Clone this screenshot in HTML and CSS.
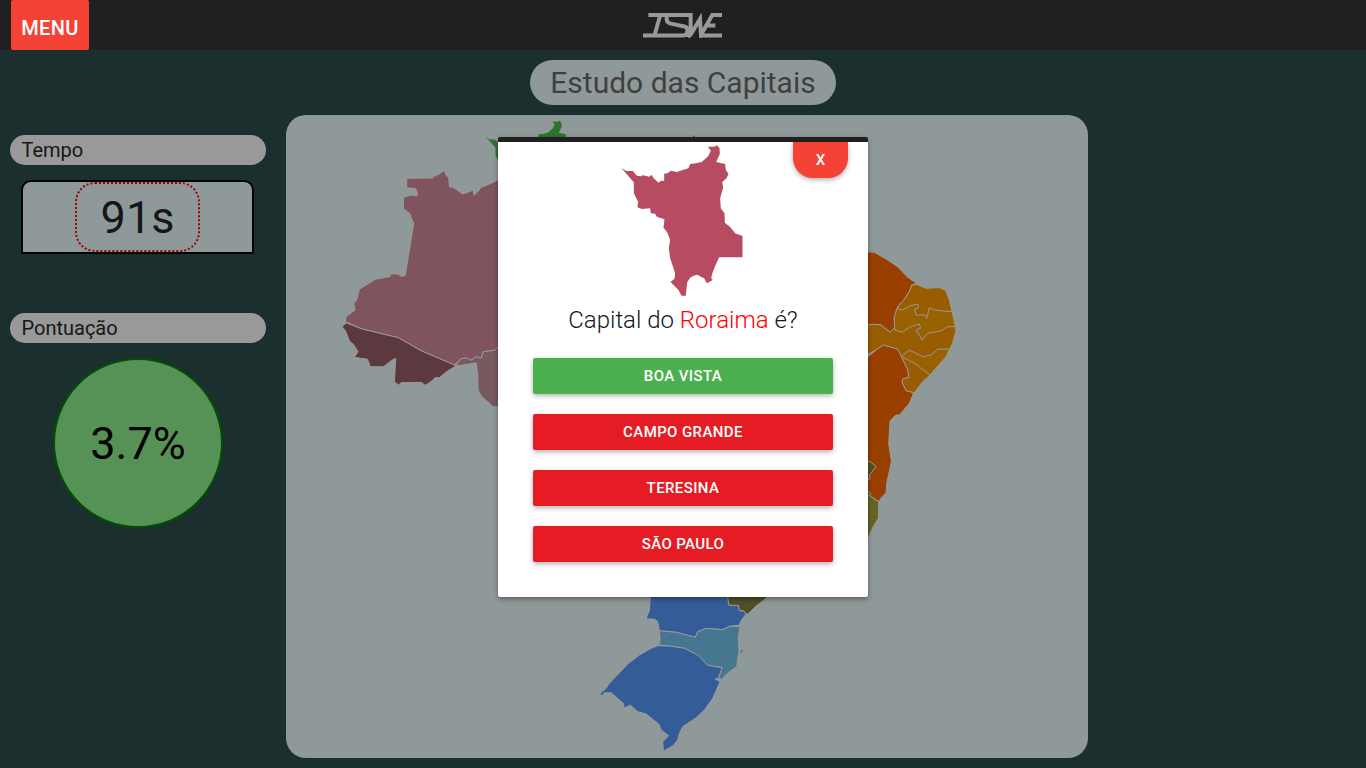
FILE: index.html
```html
<!DOCTYPE html>
<html lang="pt-BR">
<head>
<meta charset="utf-8">
<title>Estudo das Capitais</title>
<link rel="stylesheet" href="styles.css">
</head>
<body>
<header class="topbar">
  <button class="menu-btn">MENU</button>
  <svg class="logo" viewBox="369 39 237 73" preserveAspectRatio="none" aria-label="ISWE">
    <path d="M385 45H512V106M420 48L404 104M369 106H490Q502 106 502 93V88Q502 81 493 79L450 70Q440 67 440 57V48M504 111L514 100L540 57L543 104L577 45H606M560 76H586M541 106H606"/>
  </svg>
</header>
<main class="page">
  <h1 class="title">Estudo das Capitais</h1>
  <div class="content">
    <aside class="side">
      <h2 class="label">Tempo</h2>
      <div class="timer"><span class="timer-value">91s</span></div>
      <h2 class="label label-score">Pontuação</h2>
      <div class="score">3.7%</div>
    </aside>
    <section class="map-card">
      <svg class="map" viewBox="286.6 115 802 643">
        <defs>
          <path id="roraima" d="M33 113L48 123 68 123 80 137 92 139 98 136 118 140 124 134 130 144 145 158 152 152 162 153 162 131 172 130 182 122 200 126 218 120 235 115 240 102 257 100 275 96 295 77 302 62 293 50 312 50 320 46 328 54 329 72 318 96 345 102 347 120 355 132 349 145 336 157 339 172 330 205 332 235 343 250 344 278 360 291 375 310 397 318 397 382 327 382 315 408 307 428 303 445 308 450 290 460 282 445 272 440 262 434 250 437 240 443 231 457 227 497 214 497 205 480 181 456 193 446 195 430 180 385 176 355 180 330 172 308 160 293 163 268 140 260 135 251 122 250 120 235 95 237 82 232 84 215 71 190 71 157Z"/>
        </defs>
        <use class="rr" href="#roraima" transform="translate(478 109.5) scale(.256 .2433)"/>
        <path class="ap" d="M693 139L694.3 135 696.5 139Z"/>
        <path class="am" d="M407.3 178.3L434 178 432.7 175 436 176.3 441 173.3 445 170.3 446.3 174.7 449.3 177.7 450 187 453.3 187 463.3 194 469.3 192 473.7 190 474.7 195.3 478 192 481.7 187.3 491.7 183.3 500 179V346L495 350.3 484 351.7 481.7 358.3 476.7 356.7 471.7 360.3 467 358 461.7 358.7 455 365 421.7 350.7 399 337.7 362.7 329 346 321.7 346.7 316.7 355.7 310 354.3 304 357.3 300 360 289.3 375.7 279.3 390.3 276.7 391.7 273.7 398.7 274 401.7 276.3 405.7 275.7 410 250 414.3 223.3 412 218.3 410.7 214 404 208.7 404 197.3 412.7 195 417.3 196 418.3 193.3 416 188.7 407.3 187.7Z"/>
        <path class="ac" d="M346.7 322.7L342.7 326.7 346 330.7 350 341 354 344.3 358.7 351.7 355 357.3 368.3 359.3 370.7 366.7 384.3 366.7 391.7 360.7 396.3 358.3 395 382 399.3 385 401.7 382.7 421.7 382.3 426 385.3 431 382 436 377.7 440 377.7 446.7 372 456 366.3 455 365 421.7 350.7 399 337.7 362.7 329Z"/>
        <path class="ro" d="M456 365.5L461.7 358.7 467 358 471.7 360.3 476.7 356.7 481.7 358.3 484 351.7 495 350.3 500 346V407L493.3 406.7 488.3 401.7 481.7 396 478.7 390 478.3 375 476.7 362.7 461.7 365.3Z"/>
        <path class="pr" d="M651.3 590L650 610 646.7 619 655 619 658.3 621.7 660 630.7 676.7 632.3 696 637.3 698.3 631.7 706.7 628.3 723.3 629.7 730 626.3 739.7 625.3 741.7 620.7 746.7 614 744.3 610.7 740 610.7 739.3 605.7 729.3 605 728.3 590Z"/>
        <path class="sp" d="M728.3 590V596.7L729.3 605 739.3 605.7 740 610.7 744.3 610.7 746.7 614 749.3 613.3 756.7 606 766.7 598.3 770 590Z"/>
        <path class="sc" d="M660 630.7L676.7 632.3 696 637.3 698.3 631.7 706.7 628.3 723.3 629.7 730 626.3 740.7 626.7 738.7 638.3 739.7 650 737.3 666.7 730 671.7 722 679.3 719 678.3 722.7 667.7 708.3 665.3 698.3 655 685 648.3 670 646 659.3 645 660.7 640Z"/>
        <path class="island" d="M742.7 650L741.5 653"/>
        <path class="rs" d="M658.3 645.7L670 646 685 648.3 698.3 655 708.3 665.3 722.7 667.7 719 678.3 715.7 679 720.7 681.7 713.3 698.3 705 710 696.7 717.7 683.3 726.7 680 733.3 678.3 740 673.3 746 664 751.3 663.3 741.7 669.3 735.7 661.7 730 659.3 724 646.7 714 638.3 711.7 630.7 705 625 708.3 624 703.3 611.7 692.7 605 692.7 603.3 695.3 599.3 694.7 606.7 688.3 610 683.3 628.3 664 640 655 651.7 648.3Z"/>
        <path class="ma" d="M860 251.7H868L875 252.3 886.7 259 898.3 266.7 908.3 277.3 917.3 283.3 912.3 285 910 291.7 903.3 301.7 899.3 305 897.3 311.7 894.7 318.3 896 327.3 890.7 332.3 881.7 325 875 324.3 860 326Z"/>
        <path class="rn" d="M917.3 284.5L926.7 288.3 940 287.7 946 290 950 300 952.7 311.7 956.3 321.7 956.3 331.7 953.2 343.3 946.7 356.7 930.7 375 923.3 381.7 915 392.7 906.7 390.7 902.7 382.7 903.3 379 909.3 377.3 908.3 370 902.3 357.3 898.3 349.3 884 345 876.7 350 860 358V326L875 324.3 881.7 325 890.7 332.3 896 327.3 894.7 318.3 897.3 311.7 899.3 305 903.3 301.7 910 291.7 912.3 285Z"/>
        <path class="pb" d="M897.3 308.5L903.3 310 910 306 918.3 304 919.3 307.7 915.3 309 916.7 315 926 315 927.3 318.3 930 307.7 935 310 952.7 311.7 956 326.7 948.3 326.7 941.7 331 928.3 333.3 922.7 340 916.7 330 921 328.3 920 324 910 327.3 902.7 332.3 895.3 330 894.7 318.3Z"/>
        <path class="pb" d="M902.3 356L910 350 923.3 356.7 931.7 355 938.3 349.3 950 349 946.7 356.7 930.7 375 915 363.3 903.3 357.3Z"/>
        <path class="ba" d="M860 357.3L868 357.3 876.7 350 884 345 898.3 349.3 902.3 357.3 908.3 370 909.3 377.3 903.3 379 902.7 382.7 906.7 390.7 914.3 392.7 910 403.3 900 415 896.7 415 890.7 420.7 889.3 443.3 892 461.7 887.3 483.3 886.7 492.7 882.7 496.7 879.3 501.7 871.7 496.7 860 490Z"/>
        <path class="mg" d="M860 461.7H868L871 461.7 876.7 466.7 870 475 870.7 479 860 479ZM860 491L868 491 871.7 493.5 870 496 860 496Z"/>
        <path class="es" d="M860 494H868L871.7 496.7 879.3 501.7 879 518.3 873.8 526.7 868.6 538.3 860 545Z"/>
      </svg>
    </section>
  </div>
</main>
<div class="modal" role="dialog">
  <button class="close">X</button>
  <svg class="state" viewBox="30 42 371 459"><use href="#roraima"/></svg>
  <p class="question">Capital do <span class="state-name">Roraima</span> é?</p>
  <div class="answers">
    <button class="answer right">BOA VISTA</button>
    <button class="answer">CAMPO GRANDE</button>
    <button class="answer">TERESINA</button>
    <button class="answer">SÃO PAULO</button>
  </div>
</div>
</body>
</html>
```

FILE: styles.css
```css
* { box-sizing: border-box; }
body {
  margin: 0;
  height: 768px;
  overflow: hidden;
  background: #1c2f2f;
  font-family: Roboto, sans-serif;
  color: #151717;
}
button { border: 0; padding: 0; font-family: inherit; font-weight: 500; color: #fff; }
h1, h2, p { margin: 0; font-weight: 400; }
.topbar {
  display: grid;
  grid-template-columns: 1fr auto 1fr;
  align-items: start;
  height: 50px;
  padding: 0 12px 0 11px;
  background: #202020;
}
.menu-btn {
  width: 78px;
  height: 50px;
  padding-top: 6px;
  border-radius: 2px;
  background: #f44336;
  font-size: 20px;
  letter-spacing: .4px;
}
.logo { width: 79px; height: 24.5px; margin-top: 13px; }
.logo path { fill: none; stroke: #999; stroke-width: 12; }
.page { display: flex; flex-direction: column; align-items: center; padding-top: 10px; }
.title {
  width: 306px;
  height: 45px;
  border-radius: 23px;
  background: #909999;
  color: #404040;
  font-size: 30px;
  line-height: 46px;
  text-align: center;
}
.content { display: flex; gap: 20px; width: 100%; margin-top: 10px; padding-left: 10px; }
.side { display: flex; flex-direction: column; align-items: center; width: 256px; padding-top: 20px; }
.label {
  width: 100%;
  height: 30px;
  padding-left: 11.5px;
  border-radius: 15px;
  background: #999;
  font-size: 20px;
  line-height: 30px;
}
.timer {
  display: flex;
  justify-content: center;
  width: 233px;
  height: 74px;
  margin: 15px 1px 0 0;
  border: 2px solid #000;
  border-radius: 10px 10px 0 0;
  background: #909999;
}
.timer-value {
  width: 125px;
  height: 70px;
  border: 2px dotted #a00000;
  border-radius: 20px;
  font-size: 45px;
  line-height: 67px;
  text-align: center;
}
.label-score { margin-top: 59px; }
.score {
  width: 170px;
  height: 170px;
  margin-top: 15px;
  border: 2px solid #005000;
  border-radius: 50%;
  background: #569156;
  color: #000;
  font-size: 45px;
  line-height: 167px;
  text-align: center;
}
.map-card { width: 802px; height: 643px; border-radius: 20px; background: #909999; overflow: hidden; }
.map { display: block; width: 100%; height: 100%; }
.map path { stroke: #999; stroke-width: 1; }
.map .rr { fill: #2e742f; }
.map .ap, .map #roraima { stroke: none; }
.map .ap { fill: #682c39; }
.map .am { fill: #80545e; }
.map .ac { fill: #5c383f; }
.map .ro { fill: #77595f; }
.map .pr, .map .rs { fill: #345c99; }
.map .sp { fill: #514f27; }
.map .sc { fill: #477690; }
.map .island { stroke: #345c99; }
.map .ma, .map .ba { fill: #993f00; }
.map .rn { fill: #995c00; }
.map .pb { fill: #996200; }
.map .mg { fill: #514f1e; }
.map .es { fill: #666422; }
.modal {
  position: absolute;
  left: 498px;
  top: 137px;
  display: flex;
  flex-direction: column;
  align-items: center;
  width: 370px;
  height: 460px;
  border-top: 5px solid #202020;
  border-radius: 2px;
  background: #fff;
  box-shadow: 0 2px 5px rgba(0, 0, 0, .4);
}
.close {
  position: absolute;
  right: 20px;
  top: 0;
  width: 55px;
  height: 36px;
  border-radius: 0 0 20px 20px;
  background: #f44336;
  font-size: 15px;
  box-shadow: 0 2px 5px rgba(0, 0, 0, .3);
}
.state { width: 124px; height: 153px; margin-top: 2px; margin-right: 3px; fill: #b74b62; stroke: #a09a58; stroke-width: 2; }
.question { height: 32px; margin-top: 7px; color: #151717; font-size: 24px; font-weight: 300; line-height: 32px; }
.state-name { color: #f00; }
.answers { display: flex; flex-direction: column; gap: 20px; width: 300px; margin-top: 22px; }
.answer {
  height: 36px;
  border-radius: 2px;
  background: #e51c23;
  font-size: 15px;
  letter-spacing: .4px;
  box-shadow: 0 2px 5px rgba(0, 0, 0, .3);
}
.right { background: #4caf50; }
```
